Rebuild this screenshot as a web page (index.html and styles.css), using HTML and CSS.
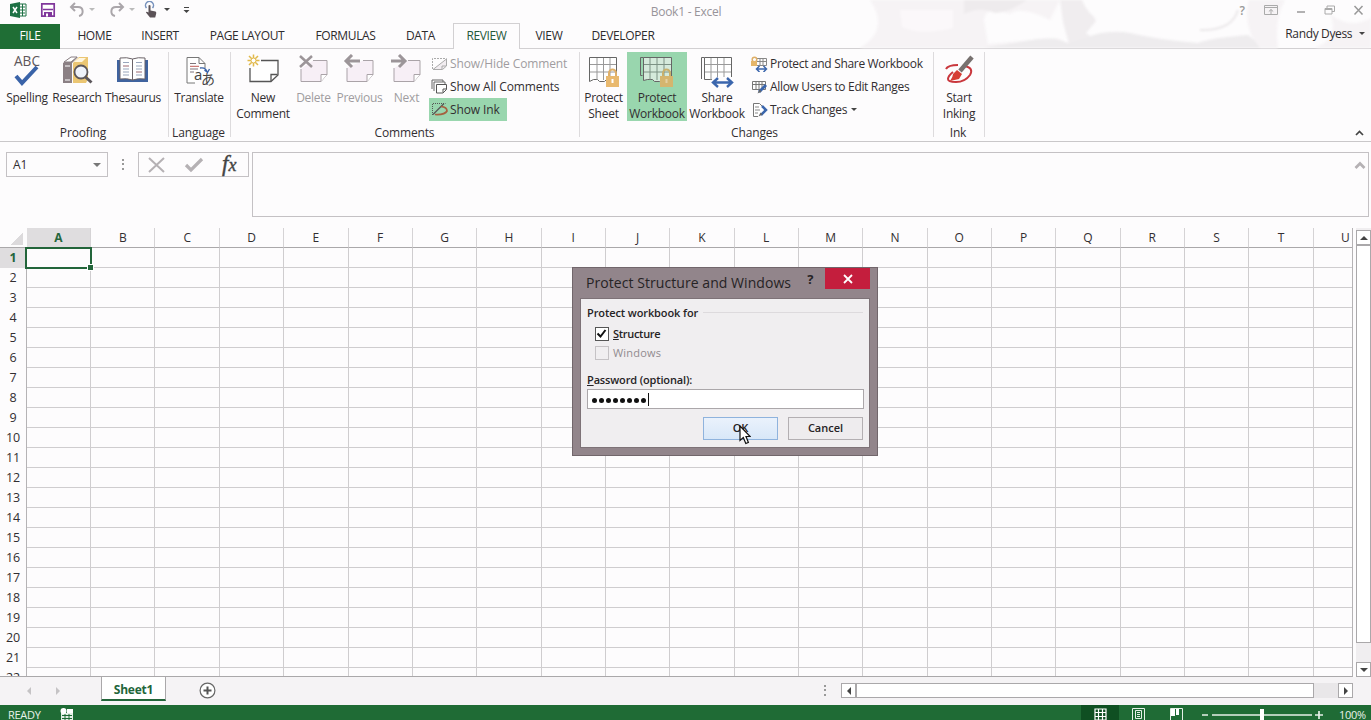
FILE: index.html
```
<!DOCTYPE html>
<html lang="en">
<head>
    <meta charset="UTF-8">
    <meta name="viewport" content="width=device-width, initial-scale=1.0">
    <title>Book1 - Excel</title>
    <link rel="stylesheet" href="styles.css">
</head>
<body>

    <div class="app">

        <header class="top">
            <svg class="clouds" width="511" height="48" viewBox="0 0 511 48">
                <path d="M10 0H200L190 20Q160 5 150 14Q125 5 124 20L128 44L196 38Q208 41 206 48H0Q30 30 10 0Z" fill="#f6f3f5"/>
                <path d="M104 0H167Q150 12 135 13Q120 6 104 14Z" fill="#eeebed"/>
                <path d="M40 10H93V28Q60 36 42 27Z" fill="#fbf8fa"/>
                <path d="M200 0H222Q226 10 234 17L236 21L226 33L233 38L225 48H210L203 22Z" fill="#f0edef"/>
                <path d="M123 48Q150 44 165 41Q192 35 208 43L226 38Q245 29 270 33Q300 40 338 43Q350 38 388 35L405 48Z" fill="#eeecee"/>
                <path d="M340 30Q372 31 378 10" fill="none" stroke="#ebe8ea" stroke-width="2"/>
                <path d="M389 0H425Q414 20 418 48H400Q382 28 389 0ZM470 14Q490 30 511 18V48H455Q480 38 470 14Z" fill="#f6f3f5"/>
            </svg>

            <div class="titlebar">
                <div class="quick">
                    <svg class="qa-excel" width="18" height="16" viewBox="0 0 18 16"><path d="M9 2h7v12H9z" fill="#fff" stroke="#1e7145"/><path d="M10 5h5M10 8h5M10 11h5M12.500 2v12" stroke="#1e7145"/><path d="M0 2l10-2v16L0 14z" fill="#1e7145"/><path d="M3 5l4 6M7 5l-4 6" stroke="#fff" stroke-width="1.500"/></svg>
                    <svg class="qa-save" width="16" height="16" viewBox="0 0 16 16"><path d="M1.800 1.800h12.400v12.400H1.800z" fill="#fff" stroke="#80379b" stroke-width="1.700"/><path d="M3 7.500h10" stroke="#80379b" stroke-width="1.500"/><path d="M4 10h8v5H4z" fill="#80379b"/><path d="M6 11.500h2v3H6z" fill="#fff"/></svg>
                    <svg class="qa-undo" width="16" height="16" viewBox="0 0 16 16"><path d="M6 1L2 5l4 4M2 5h7c6 0 6 8 1 9" fill="none" stroke="#aaa6aa" stroke-width="2"/></svg>
                    <span class="caret pale"></span>
                    <svg class="qa-redo" width="16" height="16" viewBox="0 0 16 16"><path d="M10 1l4 4-4 4M14 5H7c-6 0-6 8-1 9" fill="none" stroke="#aaa6aa" stroke-width="2"/></svg>
                    <span class="caret pale"></span>
                    <svg class="qa-touch" width="14" height="17" viewBox="0 0 14 17"><path d="M2.500 7a4 4 0 1 1 6 0" fill="none" stroke="#7893bd" stroke-width="1.500"/><path d="M4.500 4.500q1-1 2 0v5l5 1q1 .5 .7 2l-1 4H6l-4-5q0-1.500 2.500 0z" fill="#5b5257"/></svg>
                    <span class="caret"></span>
                    <svg class="qa-more" width="7" height="8" viewBox="0 0 7 8"><path d="M1 1.500h5" stroke="#444"/><path d="M.5 4h6l-3 3z" fill="#444"/></svg>
                </div>
                <div class="doc-title">Book1 - Excel</div>
                <div class="window-buttons">
                    <span class="help">?</span>
                    <svg width="14" height="11" viewBox="0 0 14 11"><path d="M.5.500h13v9H.5zM.5 2.500h13M7 9V4.500M4.800 6.500L7 4.500l2.200 2" fill="none" stroke="#aaa"/></svg>
                    <svg width="10" height="11" viewBox="0 0 10 11"><path d="M1 7h8" stroke="#999" stroke-width="1.500"/></svg>
                    <svg width="11" height="11" viewBox="0 0 11 11"><path d="M3 3V1h7.500v5.500H8M1 3.500h7V9H1zM1 4.500h7" fill="none" stroke="#aaa"/></svg>
                    <svg width="11" height="11" viewBox="0 0 11 11"><path d="M1.500 1l8 8.500M9.500 1l-8 8.500" stroke="#999" stroke-width="1.500"/></svg>
                </div>
            </div>

            <nav class="tabs">
                <span class="tab file">FILE</span>
                <span class="tab home">HOME</span>
                <span class="tab insert">INSERT</span>
                <span class="tab layout">PAGE LAYOUT</span>
                <span class="tab formulas">FORMULAS</span>
                <span class="tab data">DATA</span>
                <span class="tab review">REVIEW</span>
                <span class="tab view">VIEW</span>
                <span class="tab developer">DEVELOPER</span>
                <span class="user">Randy Dyess <i class="caret"></i></span>
            </nav>
        </header>

        <section class="ribbon">
            <div class="group proofing">
                <div class="tools">
                    <div class="big w50">
                        <svg width="34" height="34" viewBox="0 0 34 34"><text class="abc" x="4" y="12" textLength="26" lengthAdjust="spacingAndGlyphs">ABC</text><path d="M6 22l6 7L27 13" fill="none" stroke="#3a63a8" stroke-width="4"/></svg>
                        <span>Spelling</span>
                    </div>
                    <div class="big w50">
                        <svg width="34" height="34" viewBox="0 0 34 34"><path d="M3 9l8-6h7l-6 6v20H3z" fill="#8b8084"/><path d="M4 8l7-5h6l-6 5z" fill="#fff" stroke="#8b8084"/><path d="M13 9l6-6h9v22l-2 4H13z" fill="#ebc673"/><path d="M14 8l5-4h7l-4 4z" fill="#fff6df"/><path d="M5 12h5M5 26h5" stroke="#fff"/><circle cx="21" cy="18" r="6.500" fill="#eef2fa" stroke="#5b565b" stroke-width="1.800"/><path d="M25.500 23l6 5.500" stroke="#5b565b" stroke-width="3"/></svg>
                        <span>Research</span>
                    </div>
                    <div class="big w62">
                        <svg width="34" height="34" viewBox="0 0 34 34"><path d="M1 6h31v22H1z" fill="#3f639f"/><path d="M4 4q7-1 12.500 1q5.500-2 12.500-1v21q-7-1-12.500 1q-5.500-2-12.500-1z" fill="#fff" stroke="#6b6368"/><path d="M16.500 5v21" stroke="#6b6368"/><path d="M7 8.500h6M7 15h6M7 18h6M7 21h6M20 8.500h6M20 12h6M20 15h6M20 21h6" stroke="#99a6bc"/><path d="M7 12h6M20 18h6" stroke="#9c6870"/></svg>
                        <span>Thesaurus</span>
                    </div>
                </div>
                <div class="caption">Proofing</div>
            </div>

            <div class="group language">
                <div class="tools">
                    <div class="big w62">
                        <svg width="34" height="34" viewBox="0 0 34 34"><path d="M13 29H5V3.500h12l6 6V14M17 3.500v6h6" fill="#fff" stroke="#777"/><path d="M8 9.500h6M8 15h8M8 18h4" stroke="#7e757a"/><path d="M8 12.300h9" stroke="#c05b55"/><path d="M18 14q6-1 7 4M22.500 16l3 2.500 2-3.500" fill="none" stroke="#3a63a8" stroke-width="1.400"/><text class="lat" x="12" y="26">a</text><text class="kana" x="19" y="30">あ</text></svg>
                        <span>Translate</span>
                    </div>
                </div>
                <div class="caption">Language</div>
            </div>

            <div class="group comments">
                <div class="tools">
                    <div class="big w58">
                        <svg width="34" height="34" viewBox="0 0 34 34"><path d="M15 6.500h17V21l-7 6.500H4V14" fill="#fff" stroke="#555" stroke-width="1.300"/><path d="M25 27v-6.500h6.500" fill="none" stroke="#555" stroke-width="1.300"/><path d="M7.500.5v12M1.500 6.500h12M3 2l9 9M12 2l-9 9" stroke="#e1b94a" stroke-width="1.500"/><circle cx="7.500" cy="6.500" r="2.500" fill="#fff" stroke="#e1b94a"/></svg>
                        <span>New<br>Comment</span>
                    </div>
                    <div class="big off w43">
                        <svg width="34" height="34" viewBox="0 0 34 34"><path d="M4 15v12.500h20l6-7V6.500H16" fill="#f7eff6" stroke="#aaa3a8"/><path d="M24 27.500v-7h6" fill="#fff" stroke="#aaa3a8"/><path d="M3 2l12 11M15 2L3 13" stroke="#9c9599" stroke-width="2.500"/></svg>
                        <span>Delete</span>
                    </div>
                    <div class="big off w49">
                        <svg width="34" height="34" viewBox="0 0 34 34"><path d="M4 14v13.500h20l6-7V6.500H20" fill="#f7eff6" stroke="#aaa3a8"/><path d="M24 27.500v-7h6" fill="#fff" stroke="#aaa3a8"/><path d="M9 1L3 7l6 6M3 7h14" fill="none" stroke="#9c9599" stroke-width="3"/></svg>
                        <span>Previous</span>
                    </div>
                    <div class="big off w45">
                        <svg width="34" height="34" viewBox="0 0 34 34"><path d="M4 14v13.500h20l6-7V6.500H18" fill="#f7eff6" stroke="#aaa3a8"/><path d="M24 27.500v-7h6" fill="#fff" stroke="#aaa3a8"/><path d="M9 1l6 6-6 6M15 7H1" fill="none" stroke="#9c9599" stroke-width="3"/></svg>
                        <span>Next</span>
                    </div>
                    <div class="small-list">
                        <div class="small off">
                            <svg width="17" height="14" viewBox="0 0 17 14"><path d="M1.500 12V1.500h14" fill="none" stroke="#aaa" stroke-dasharray="2 1"/><path d="M2 12.500L15.500 2v7l-4 3.500zM11 12V9h4" fill="#f2edf1" stroke="#aaa"/></svg>
                            <span>Show/Hide Comment</span>
                        </div>
                        <div class="small">
                            <svg width="17" height="15" viewBox="0 0 17 15"><path d="M1 10V1h11v2M3 12V3h11v2" fill="none" stroke="#666"/><path d="M5.500 5.500h10v5l-3.500 3.500H5.500zM12 13.500v-3.500h3.500" fill="#fff" stroke="#555"/></svg>
                            <span>Show All Comments</span>
                        </div>
                        <div class="small on">
                            <svg width="17" height="15" viewBox="0 0 17 15"><path d="M1.500 13V1.500h13" fill="none" stroke="#555" stroke-dasharray="1 1"/><path d="M2 12.500L13 1.500" stroke="#555" stroke-width="1.300"/><path d="M10 4.500q6 .5 6 4.500q-2 4-12 3.500" fill="none" stroke="#a5603f" stroke-width="1.700"/></svg>
                            <span>Show Ink</span>
                        </div>
                    </div>
                </div>
                <div class="caption">Comments</div>
            </div>

            <div class="group changes">
                <div class="tools">
                    <div class="big w47">
                        <svg width="34" height="34" viewBox="0 0 34 34"><path d="M2.500 3.500h27v22h-10l-2 2h-5l-2-2h-4l-4 2z" fill="#fff" stroke="#666"/><path d="M3 10.500h26M3 18h26M10 4v22M16.500 4v22M23 4v22" stroke="#999"/><path d="M22 22v-3a3.500 3.500 0 0 1 7 0v3" fill="none" stroke="#dfb069" stroke-width="2"/><path d="M19 22h13v11H19z" fill="#e9b96e"/><path d="M25.500 25v4" stroke="#fff" stroke-width="2"/></svg>
                        <span>Protect<br>Sheet</span>
                    </div>
                    <div class="big on w60">
                        <svg width="34" height="34" viewBox="0 0 34 34"><path d="M.5 3.500h3M.5 3.500v18h2" fill="none" stroke="#666"/><path d="M3.500 3.500h28v22h-10l-2 2h-5l-2-2h-5l-4 1z" fill="#d5eadb" stroke="#666"/><path d="M4 10.500h27M4 18h27M10 4v22M17 4v22M24 4v22" stroke="#7c9284"/><path d="M23 22v-3a3.500 3.500 0 0 1 7 0v3" fill="none" stroke="#c8b06b" stroke-width="2"/><path d="M20 22h13v11H20z" fill="#d5b56e"/><path d="M26.500 25v4" stroke="#e5d0a2" stroke-width="2"/></svg>
                        <span>Protect<br>Workbook</span>
                    </div>
                    <div class="big w60">
                        <svg width="34" height="34" viewBox="0 0 34 34"><path d="M1.500 25V3.500h3" fill="none" stroke="#666"/><path d="M4.500 3.500h27v22h-27z" fill="#fff" stroke="#666"/><path d="M5 10.500h26M5 18h26M11 4v22M17.500 4v22M24 4v22" stroke="#999"/><path d="M12 23h22v9H12z" fill="#fdfcfd"/><path d="M14 28.500h17M18 24l-5 4.500 5 4.500M27 24l5 4.500-5 4.500" fill="none" stroke="#3b66ad" stroke-width="2.400"/></svg>
                        <span>Share<br>Workbook</span>
                    </div>
                    <div class="small-list">
                        <div class="small">
                            <svg width="17" height="16" viewBox="0 0 17 16"><path d="M5.500 2.500h10v7h-10M6 5.500h9M9 3v6M12 3v6" fill="none" stroke="#888"/><circle cx="3.500" cy="3.500" r="2.300" fill="none" stroke="#dfb069" stroke-width="1.500"/><path d="M0 5h6v5H0z" fill="#e5b66a"/><path d="M6 13h9M8.500 10l-3 3 3 3M12.500 10l3 3-3 3" fill="none" stroke="#3b66ad" stroke-width="1.500"/></svg>
                            <span>Protect and Share Workbook</span>
                        </div>
                        <div class="small">
                            <svg width="17" height="16" viewBox="0 0 17 16"><path d="M1.500 2.500h13v8h-13zM2 5.500h12M5 3v7M8 3v7M11 3v7" fill="#fff" stroke="#777"/><path d="M15 6l-7 7" stroke="#3b66ad" stroke-width="3"/><path d="M8.500 10.500l-2 4 4-2z" fill="#666"/></svg>
                            <span>Allow Users to Edit Ranges</span>
                        </div>
                        <div class="small">
                            <svg width="17" height="16" viewBox="0 0 17 16"><path d="M7 14.500H2.500v-13h6L13 6" fill="#fff" stroke="#777"/><path d="M4 5h4M4 8h5M4 11h3" stroke="#888"/><path d="M11 4l4 4-5 5" fill="none" stroke="#3b66ad" stroke-width="2.500"/><path d="M9.500 10.500l-2 4 4-2z" fill="#666"/></svg>
                            <span>Track Changes</span><i class="caret"></i>
                        </div>
                    </div>
                </div>
                <div class="caption">Changes</div>
            </div>

            <div class="group ink">
                <div class="tools">
                    <div class="big w50">
                        <svg width="34" height="34" viewBox="0 0 34 34"><path d="M4 15q2-4 12-4M23 12q9 2 5 9q-5 7-14 7q-8 0-8-3q0-3 5-7" fill="none" stroke="#c9373d" stroke-width="2"/><path d="M30 3L18 17" stroke="#77716f" stroke-width="4.500"/><path d="M15 16l5 4-3 5-9 2q3-4 3-7z" fill="#d63d34"/></svg>
                        <span>Start<br>Inking</span>
                    </div>
                </div>
                <div class="caption">Ink</div>
            </div>

            <svg class="collapse" width="9" height="6" viewBox="0 0 9 6"><path d="M1 5l3.500-3.500L8 5" fill="none" stroke="#444" stroke-width="1.700"/></svg>
        </section>

        <section class="formula-bar">
            <div class="name-box"><span>A1</span><i class="caret"></i></div>
            <span class="dots"></span>
            <div class="fx-box">
                <svg width="18" height="16" viewBox="0 0 18 16"><path d="M1 1l15 14M16 1L1 15" stroke="#b5b1b4" stroke-width="2"/></svg>
                <svg width="20" height="16" viewBox="0 0 20 16"><path d="M2 8l5 5L18 2" fill="none" stroke="#b5b1b4" stroke-width="3.200"/></svg>
                <span class="fx">f<small>x</small></span>
            </div>
            <div class="formula-input">
                <svg width="12" height="9" viewBox="0 0 12 9"><path d="M1.500 7L6 2.500 10.500 7" fill="none" stroke="#b5b1b4" stroke-width="2.700"/></svg>
            </div>
        </section>

        <main class="sheet">
            <div class="grid" id="grid"></div>
            <div class="selected"></div>
            <div class="v-scroll">
                <span class="scroll-btn"><i class="arrow up"></i></span>
                <span class="v-thumb"></span>
                <span class="scroll-btn"><i class="arrow down"></i></span>
            </div>
        </main>

        <section class="sheet-bar">
            <div class="sheet-nav"><i class="arrow left pale"></i><i class="arrow right pale"></i></div>
            <span class="sheet-tab">Sheet1</span>
            <svg class="add" width="17" height="17" viewBox="0 0 17 17"><circle cx="8.500" cy="8.500" r="7.400" fill="#fff" stroke="#666" stroke-width="1.200"/><path d="M8.500 4.500v8M4.500 8.500h8" stroke="#555" stroke-width="2"/></svg>
            <span class="dots"></span>
            <div class="h-scroll">
                <span class="scroll-btn"><i class="arrow left"></i></span>
                <span class="h-thumb"></span>
                <span class="scroll-btn"><i class="arrow right"></i></span>
            </div>
        </section>

        <footer class="status">
            <span class="ready">READY</span>
            <svg class="macro" width="14" height="14" viewBox="0 0 14 14"><path d="M1 5h12v9H1z" fill="#e4efe6"/><path d="M7 1h6v4H7z" fill="#fff"/><circle cx="3.500" cy="3" r="3" fill="#fff"/><path d="M2 7.500h10M2 10.500h10M5 6v8M9 6v8" stroke="#1e6b35"/></svg>
            <span class="view-btn active"><svg width="13" height="13" viewBox="0 0 13 13"><path d="M1 1h11v11H1zM1 4.500h11M1 8.500h11M4.500 1v11M8.500 1v11" fill="none" stroke="#fff" stroke-width="1.200"/></svg></span>
            <span class="view-btn"><svg width="13" height="13" viewBox="0 0 13 13"><path d="M.5.500h12v12H.5zM3.500 2.500h6v8h-6zM5 4.500h3M5 6.500h3M5 8.500h3" fill="none" stroke="#e6f0e8"/></svg></span>
            <span class="view-btn"><svg width="13" height="13" viewBox="0 0 13 13"><path d="M.5.500h12v12H.5z" fill="none" stroke="#e6f0e8"/><path d="M1 1h4v7H1zM6 1h3v6H6z" fill="#fff"/></svg></span>
            <svg class="zoom" width="124" height="13" viewBox="0 0 124 13"><path d="M2 7h6M12 7h100M115 7h8M119 3v8" stroke="#e6f0e8" stroke-width="1.700"/><path d="M60 1h4v12h-4z" fill="#fff"/></svg>
            <span class="percent">100%</span>
        </footer>

        <div class="dialog">
            <div class="dialog-head">
                <span class="dialog-title">Protect Structure and Windows</span>
                <span class="dialog-help">?</span>
                <span class="dialog-close"><svg width="10" height="10" viewBox="0 0 10 10"><path d="M1 1l8 8M9 1L1 9" stroke="#fff" stroke-width="1.800"/></svg></span>
            </div>
            <div class="dialog-body">
                <div class="legend"><span>Protect workbook for</span></div>
                <label class="check"><span class="square"><svg width="11" height="11" viewBox="0 0 11 11"><path d="M1.500 5.500l3 3L9.500 2" fill="none" stroke="#111" stroke-width="2"/></svg></span><span class="check-text"><u>S</u>tructure</span></label>
                <label class="check off"><span class="square"></span><span class="check-text">Windows</span></label>
                <div class="pw-label"><u>P</u>assword (optional):</div>
                <div class="pw"><i></i><i></i><i></i><i></i><i></i><i></i><i></i><i></i><b></b></div>
                <div class="actions">
                    <span class="dlg-btn hot">OK</span>
                    <span class="dlg-btn">Cancel</span>
                </div>
            </div>
        </div>

        <svg class="cursor" width="12" height="20" viewBox="0 0 12 20"><path d="M1 1v14.500l3.300-3L6.800 18.500l2.600-1.100L7 11.500h4.200z" fill="#fff" stroke="#111" stroke-width="1.200"/></svg>

    </div>

    <script>
        const grid = document.getElementById("grid");
        const letters = "ABCDEFGHIJKLMNOPQRSTU";

        function addCell(className, text) {
            const cell = document.createElement("div");
            cell.className = className;
            cell.innerText = text;
            grid.appendChild(cell);
        }

        addCell("corner", "");
        for (const letter of letters) {
            addCell(letter === "A" ? "col-head current" : "col-head", letter);
        }

        for (let row = 1; row <= 22; row++) {
            addCell(row === 1 ? "row-head current" : "row-head", row);
            for (let i = 0; i < letters.length; i++) {
                addCell("cell", "");
            }
        }
    </script>
</body>
</html>
```
FILE: styles.css
```
*,*::before,*::after {
    box-sizing: border-box;
    margin: 0;
    padding: 0;
}

body {
    font-family: "Open Sans", "Noto Sans", sans-serif;
    font-size: 12px;
    color: #322e31;
    background-color: #fdfcfd;
    overflow: hidden;
}

svg {
    display: block;
    flex: none;
}

.app {
    position: relative;
    width: 1371px;
    height: 720px;
    overflow: hidden;
    display: flex;
    flex-direction: column;
}

.caret {
    display: inline-block;
    flex: none;
    border: 3px solid transparent;
    border-top-color: #444;
    border-bottom: 0;
}

.caret.pale {
    border-top-color: #bbb;
}

/* title bar and tabs */
.top {
    position: relative;
    height: 49px;
    border-bottom: 1px solid #d2d0d2;
}

.clouds {
    position: absolute;
    right: 0;
    top: 0;
    filter: blur(1px);
}

.titlebar {
    position: relative;
    height: 23px;
    display: grid;
    grid-template-columns: 1fr 100px 1fr;
}

.quick {
    display: flex;
    align-items: center;
    padding: 0 0 4px 10px;
}

.qa-save { margin-left: 12px; }
.qa-undo { margin: 0 4px 0 13px; }
.qa-redo { margin: 0 4px 0 14px; }
.qa-touch { margin: 0 6px 0 9px; }
.qa-more { margin-left: 13px; }

.doc-title {
    text-align: center;
    line-height: 23px;
    padding-left: 1px;
    color: #98949a;
    letter-spacing: -0.25px;
}

.window-buttons {
    display: flex;
    justify-content: flex-end;
    align-items: center;
    gap: 18px;
    padding: 0 7px 3px 0;
}

.help {
    font-weight: 600;
    color: #999;
    margin-right: 1px;
}

.tabs {
    position: relative;
    display: flex;
    height: 26px;
    line-height: 26px;
    color: #2e2b2d;
    white-space: nowrap;
}

.tab {
    text-align: center;
    letter-spacing: -0.35px;
}

.tab.file { width: 60px; height: 25px; margin-top: 1px; line-height: 24px; background-color: #1f6e35; color: #fff; }
.tab.home { width: 69px; }
.tab.insert { width: 62px; }
.tab.layout { width: 112px; }
.tab.formulas { width: 85px; }
.tab.data { width: 65px; }
.tab.review { width: 67px; line-height: 24px; border: 1px solid #d2d0d2; border-bottom: 0; background-color: #fdfcfd; color: #24583a; }
.tab.view { width: 58px; }
.tab.developer { width: 90px; }

.user {
    margin-left: auto;
    padding-right: 6px;
    line-height: 21px;
    letter-spacing: -0.35px;
}

.user .caret {
    margin: 0 0 3px 4px;
}

/* ribbon */
.ribbon {
    position: relative;
    display: flex;
    height: 93px;
    border-bottom: 1px solid #c9c7c9;
}

.group {
    display: flex;
    flex-direction: column;
    border-right: 1px solid #dddbdd;
    margin: 3px 0 4px;
}

.proofing { width: 169px; padding-left: 2px; }
.language { width: 62px; }
.comments { width: 349px; padding-left: 3px; }
.changes { width: 354px; }
.ink { width: 51px; }

.tools {
    display: flex;
    height: 69px;
}

.caption {
    text-align: center;
    line-height: 23px;
    height: 16px;
    padding-right: 4px;
    letter-spacing: -0.15px;
}

.language .caption,
.ink .caption {
    padding-right: 2px;
}

.big {
    height: 69px;
    padding-top: 2px;
    display: flex;
    flex-direction: column;
    align-items: center;
    flex: none;
}

.big span {
    text-align: center;
    line-height: 16px;
    white-space: nowrap;
    margin-top: 2px;
    letter-spacing: -0.25px;
}

.w43 { width: 43px; }
.w45 { width: 45px; }
.w47 { width: 47px; }
.w49 { width: 49px; }
.w50 { width: 50px; }
.w58 { width: 58px; }
.w60 { width: 60px; }
.w62 { width: 62px; }

.language .w62 {
    width: 60px;
}

.off {
    color: #a09ca0;
}

.on {
    background-color: #99d6ae;
}

.small-list {
    display: flex;
    flex-direction: column;
    align-items: flex-start;
}

.small {
    display: flex;
    align-items: center;
    height: 23px;
    padding: 0 7px 0 2px;
    gap: 2px;
    white-space: nowrap;
    letter-spacing: -0.12px;
}

.changes .small {
    padding-left: 4px;
    letter-spacing: -0.32px;
}

.small .caret {
    margin-left: 2px;
}

.abc {
    font-size: 14px;
    fill: #5d575b;
}

.lat {
    font-size: 15px;
    fill: #444;
}

.kana {
    font-family: "Noto Sans CJK JP", sans-serif;
    font-size: 14px;
    fill: #444;
}

.collapse {
    margin: 81px 7px 0 auto;
}

/* formula bar */
.formula-bar {
    display: flex;
    align-items: flex-start;
    height: 86px;
    padding: 10px 2px 0 6px;
}

.name-box {
    width: 102px;
    height: 25px;
    border: 1px solid #c4c1c4;
    display: flex;
    justify-content: space-between;
    align-items: center;
    padding: 0 6px;
}

.name-box .caret {
    border-width: 4px;
    border-bottom: 0;
    border-top-color: #777;
}

.dots {
    width: 2px;
    height: 11px;
    background: repeating-linear-gradient(#999 0 2px, transparent 2px 4.500px);
}

.formula-bar .dots {
    margin: 7px 14px 0;
}

.fx-box {
    width: 111px;
    height: 25px;
    border: 1px solid #c4c1c4;
    display: flex;
    align-items: center;
    gap: 18px;
    padding-left: 9px;
}

.fx {
    font: italic 23px/22px "Liberation Serif", serif;
    color: #444;
    -webkit-text-stroke: 0.4px #444;
}

.fx small {
    font-size: 18px;
}

.formula-input {
    flex: 1;
    height: 65px;
    margin-left: 3px;
    border: 1px solid #c4c1c4;
    display: flex;
    justify-content: flex-end;
    padding: 8px 2px 0 0;
}

/* grid */
.sheet {
    position: relative;
    display: flex;
    justify-content: space-between;
    height: 449px;
}

.grid {
    width: 1353px;
    height: 449px;
    overflow: hidden;
    display: grid;
    grid-template-columns: 26.800px repeat(21, 64.350px);
    grid-template-rows: 20px repeat(22, 20px);
    border-right: 1px solid #b5b3b5;
    border-bottom: 1px solid #aaa8aa;
}

.corner {
    border-bottom: 1px solid #aaa8aa;
    background: linear-gradient(135deg, transparent 50%, #dcdadc 50%) 11px 5px / 12px 12px no-repeat;
}

.col-head {
    border-right: 1px solid #d5d3d5;
    border-bottom: 1px solid #aaa8aa;
    text-align: center;
    line-height: 19px;
}

.row-head {
    border-right: 1px solid #b5b3b5;
    text-align: center;
    line-height: 20px;
    font-size: 12.500px;
    letter-spacing: -0.3px;
}

.cell {
    border-right: 1px solid #cfcdcf;
    border-bottom: 1px solid #cfcdcf;
}

.current {
    background-color: #dfdddf;
    color: #24653c;
    font-weight: bold;
}

.selected {
    position: absolute;
    left: 25px;
    top: 19px;
    width: 67px;
    height: 22px;
    border: 2px solid #22653a;
}

.selected::after {
    content: "";
    position: absolute;
    right: -3px;
    bottom: -3px;
    width: 5px;
    height: 5px;
    background-color: #22653a;
    outline: 1px solid #fff;
}

.v-scroll {
    width: 15px;
    display: flex;
    flex-direction: column;
    padding-top: 2px;
    background-color: #f0eef0;
}

.scroll-btn {
    flex: none;
    width: 15px;
    height: 15px;
    border: 1px solid #aaa8aa;
    background-color: #fff;
    display: flex;
    align-items: center;
    justify-content: center;
}

.v-thumb {
    height: 398px;
    margin-bottom: 19px;
    border: 1px solid #aaa8aa;
    background-color: #fff;
}

.arrow {
    border: 4px solid transparent;
}

.arrow.up { border-bottom-color: #444; border-top: 0; }
.arrow.down { border-top-color: #444; border-bottom: 0; }
.arrow.left { border-right-color: #444; border-left: 0; }
.arrow.right { border-left-color: #444; border-right: 0; }
.arrow.left.pale { border-right-color: #c5c3c5; }
.arrow.right.pale { border-left-color: #c5c3c5; }

/* sheet tabs */
.sheet-bar {
    display: flex;
    height: 28px;
    background-color: #f5f3f5;
}

.sheet-nav {
    width: 101px;
    display: flex;
    gap: 25px;
    align-items: center;
    padding-left: 27px;
}

.sheet-tab {
    width: 65px;
    height: 25px;
    margin-top: -1px;
    background-color: #fff;
    border: 1px solid #aaa8aa;
    border-top: 0;
    border-bottom: 2px solid #22653a;
    color: #22653a;
    font-weight: bold;
    text-align: center;
    line-height: 27px;
    letter-spacing: -0.2px;
}

.add {
    margin: 5px 0 0 33px;
}

.sheet-bar .dots {
    margin: 8px 15px 0 auto;
}

.h-scroll {
    display: flex;
    width: 512px;
    height: 15px;
    margin: 6px 18px 0 0;
    background-color: #e9e7e9;
}

.h-thumb {
    width: 458px;
    margin-right: auto;
    border: 1px solid #aaa8aa;
    background-color: #fff;
}

/* status bar */
.status {
    display: flex;
    height: 15px;
    background-color: #1f6b35;
    color: #e8f1ea;
    font-size: 11px;
    line-height: 20px;
}

.ready {
    padding-left: 8px;
    width: 60px;
    letter-spacing: -0.3px;
}

.macro {
    margin-top: 3px;
}

.view-btn {
    width: 38px;
    height: 15px;
    padding: 3px 0 0 13px;
    flex: none;
}

.view-btn.active {
    margin-left: auto;
    background-color: #0f4f22;
}

.zoom {
    margin: 3px 0 0 5px;
}

.percent {
    width: 47px;
    padding-left: 15px;
    letter-spacing: -0.3px;
}

/* protect workbook dialog */
.dialog {
    position: absolute;
    left: 572px;
    top: 267px;
    width: 306px;
    height: 189px;
    background-color: #92858b;
    border: 1px solid #71666b;
    padding: 0 7px 7px;
    color: #262325;
    font-size: 11px;
}

.dialog-head {
    height: 30px;
    display: flex;
    padding-left: 6px;
}

.dialog-title {
    width: 222px;
    font-size: 14px;
    line-height: 30px;
    letter-spacing: 0.06px;
    white-space: nowrap;
}

.dialog-help {
    width: 18px;
    font-weight: bold;
    font-size: 13px;
    line-height: 22px;
}

.dialog-close {
    width: 45px;
    height: 21px;
    background-color: #c41e3d;
    display: flex;
    align-items: center;
    justify-content: center;
}

.dialog-body {
    height: 150px;
    background-color: #f0eef0;
    border: 1px solid #7d7277;
    padding: 5px 6px;
}

.legend {
    display: flex;
    align-items: center;
    gap: 5px;
    height: 16px;
    font-weight: 600;
    letter-spacing: -0.1px;
}

.legend::after {
    content: "";
    flex: 1;
    height: 1px;
    background-color: #dddadd;
}

.check {
    display: flex;
    align-items: center;
    gap: 4px;
    height: 19px;
    padding-left: 8px;
    font-weight: 600;
    letter-spacing: -0.3px;
}

.legend + .check {
    margin-top: 4px;
}

.check.off {
    font-weight: normal;
    letter-spacing: 0.2px;
    color: #918b8f;
}

.square {
    width: 14px;
    height: 14px;
    border: 1px solid #555;
    background-color: #fff;
}

.off .square {
    border-color: #c5c2c5;
    background-color: transparent;
}

.pw-label {
    margin-top: 9px;
    height: 17px;
    line-height: 17px;
    font-weight: 600;
    letter-spacing: -0.15px;
}

.pw {
    width: 277px;
    height: 20px;
    margin-top: 1px;
    border: 1px solid #aba7aa;
    background-color: #fff;
    display: flex;
    align-items: center;
    gap: 2px;
    padding-left: 4px;
}

.pw i {
    width: 5px;
    height: 5px;
    margin-top: 2px;
    border-radius: 50%;
    background-color: #111;
}

.pw b {
    width: 1px;
    height: 13px;
    background-color: #111;
}

.actions {
    display: flex;
    justify-content: flex-end;
    gap: 10px;
    margin-top: 8px;
}

.dlg-btn {
    width: 75px;
    height: 23px;
    border: 1px solid #b3afb2;
    background-color: #eeecee;
    text-align: center;
    line-height: 20px;
    font-weight: 600;
}

.dlg-btn.hot {
    border-color: #8fb3dd;
    background: linear-gradient(#eaf2fc, #d8e7f8);
}

.cursor {
    position: absolute;
    left: 739px;
    top: 425px;
}
```
